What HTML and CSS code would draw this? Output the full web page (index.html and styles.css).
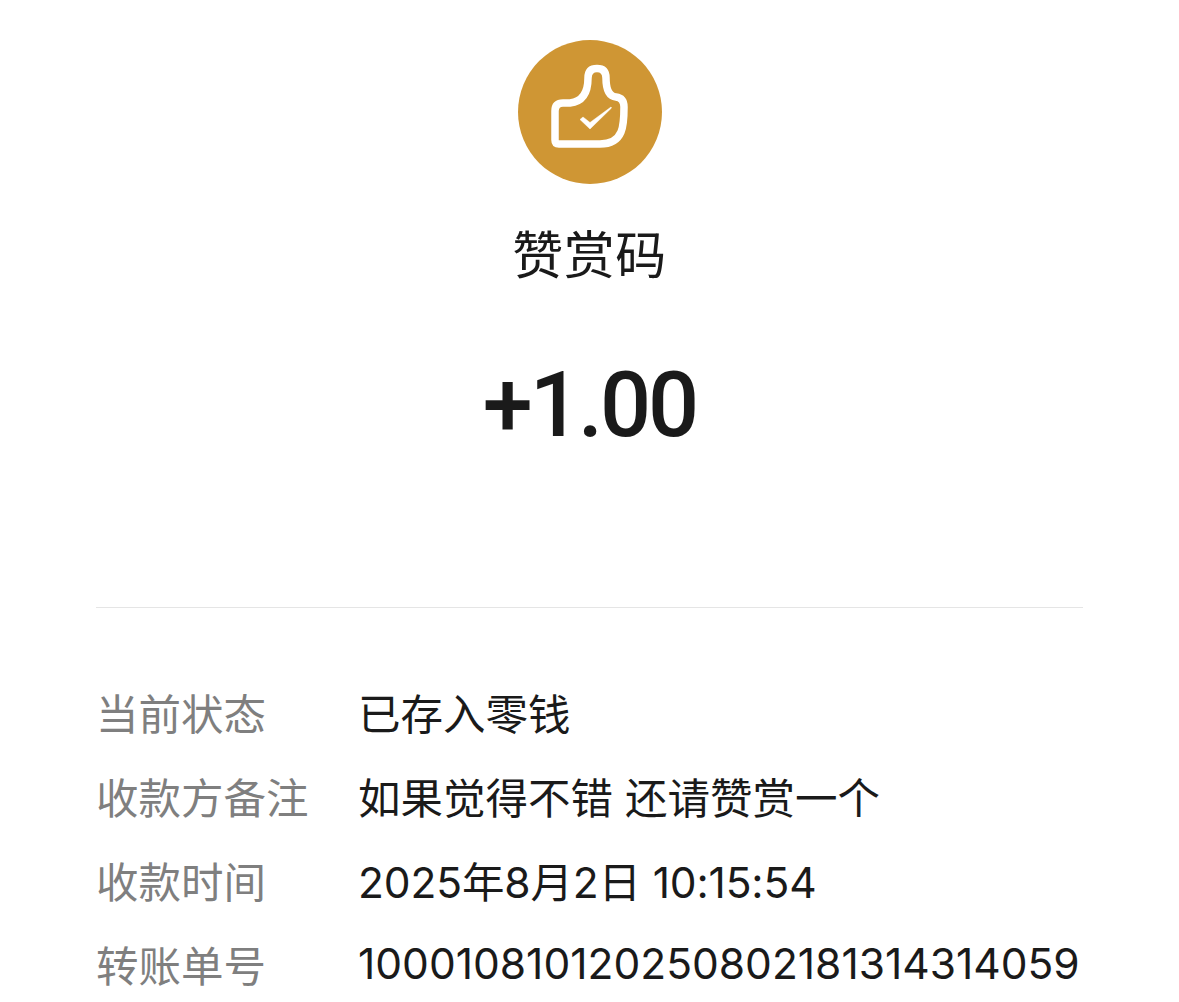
FILE: index.html
```html
<!DOCTYPE html>
<html lang="zh">
<head>
<meta charset="utf-8">
<link rel="stylesheet" href="styles.css">
<title>赞赏码</title>
</head>
<body>
<main class="page">
  <div class="logo">
    <svg viewBox="0 0 144 144" width="144" height="144">
      <circle cx="72" cy="72" r="72" fill="#cf9634"/>
      <path d="M37 71 Q37 63 45 63 L52 63 Q70 61 70 38 Q70 28.500 79 28.500 Q88 28.500 88 38 Q88 56 98 57 Q106 58 106 67 Q106 85 103 92 Q98 104 82 104 L41 104 Q37 104 37 100 Z" fill="none" stroke="#fff" stroke-width="7.500" stroke-linejoin="round"/>
      <path d="M62 79.500 L65 77 L72 82.500 L93 67 L93.500 68 L72 89 Z" fill="#fff" stroke="#fff" stroke-width="0.500" stroke-linejoin="round"/>
    </svg>
  </div>
  <div class="name">赞赏码</div>
  <div class="amount">+1.00</div>
  <div class="divider"></div>
  <dl class="rows">
    <div class="row"><dt>当前状态</dt><dd>已存入零钱</dd></div>
    <div class="row"><dt>收款方备注</dt><dd>如果觉得不错 还请赞赏一个</dd></div>
    <div class="row"><dt>收款时间</dt><dd class="date">2025年8月2日 10:15:54</dd></div>
    <div class="row"><dt>转账单号</dt><dd>100010810120250802181314314059</dd></div>
  </dl>
</main>
</body>
</html>
```
FILE: styles.css
```css
html, body { margin: 0; padding: 0; background: #fff; overflow: hidden; }
.page { width: 1179px; height: 1002px; display: flex; flex-direction: column; align-items: center; font-family: "Inter", "Noto Sans CJK SC", sans-serif; color: #1a1a1a; overflow: hidden; }
.logo { margin-top: 40px; height: 144px; width: 144px; flex: none; }
.logo svg { display: block; }
.name { margin-top: 42px; font-size: 51px; line-height: 60px; letter-spacing: 0.500px; flex: none; }
.amount { margin-top: 70px; font-family: "Roboto", sans-serif; font-size: 90px; line-height: 100px; font-weight: 500; letter-spacing: -3px; flex: none; }
.divider { margin-top: 151px; width: 987px; height: 1px; background: #e5e5e5; flex: none; }
.rows { margin: 61px 0 0; width: 987px; padding: 0; flex: none; }
.row { display: flex; height: 84px; align-items: center; font-size: 42.500px; }
dt { width: 262px; color: #7f7f7f; flex: none; }
dd { margin: 0; white-space: nowrap; }
.date { letter-spacing: -0.150px; }
```
